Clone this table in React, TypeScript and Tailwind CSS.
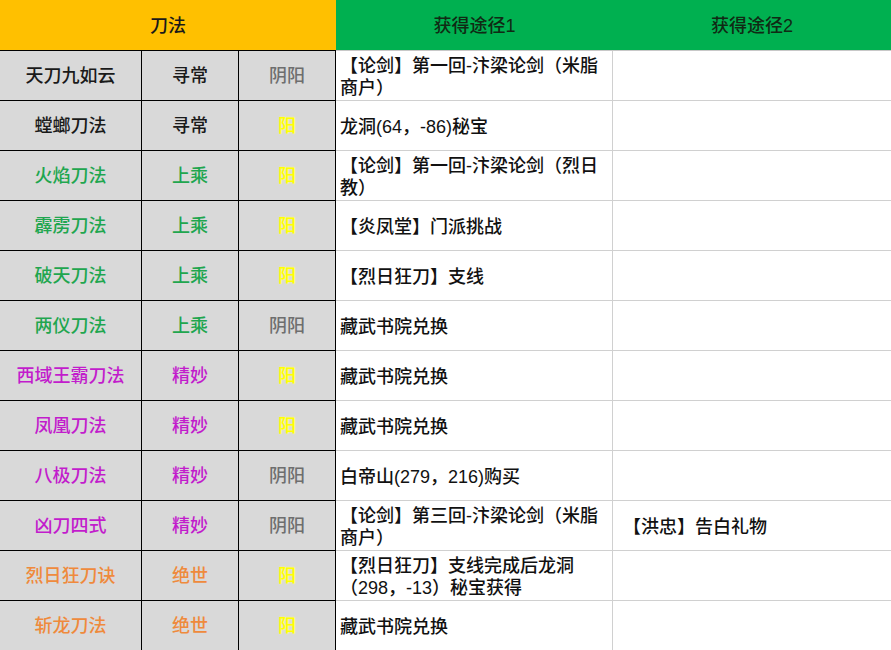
const font = { fontFamily: '"Liberation Sans", "Noto Sans CJK SC", sans-serif' };

type Row = { name: string; grade: string; yy: string; src1: string; src2?: string; tone: string };

const rows: Row[] = [
  { name: "天刀九如云", grade: "寻常", yy: "阴阳", src1: "【论剑】第一回-汴梁论剑（米脂商户）", tone: "text-[#1a1a1a]" },
  { name: "螳螂刀法", grade: "寻常", yy: "阳", src1: "龙洞(64，-86)秘宝", tone: "text-[#1a1a1a]" },
  { name: "火焰刀法", grade: "上乘", yy: "阳", src1: "【论剑】第一回-汴梁论剑（烈日教）", tone: "text-[#1fa64f]" },
  { name: "霹雳刀法", grade: "上乘", yy: "阳", src1: "【炎凤堂】门派挑战", tone: "text-[#1fa64f]" },
  { name: "破天刀法", grade: "上乘", yy: "阳", src1: "【烈日狂刀】支线", tone: "text-[#1fa64f]" },
  { name: "两仪刀法", grade: "上乘", yy: "阴阳", src1: "藏武书院兑换", tone: "text-[#1fa64f]" },
  { name: "西域王霸刀法", grade: "精妙", yy: "阳", src1: "藏武书院兑换", tone: "text-[#c21ccc]" },
  { name: "凤凰刀法", grade: "精妙", yy: "阳", src1: "藏武书院兑换", tone: "text-[#c21ccc]" },
  { name: "八极刀法", grade: "精妙", yy: "阴阳", src1: "白帝山(279，216)购买", tone: "text-[#c21ccc]" },
  { name: "凶刀四式", grade: "精妙", yy: "阴阳", src1: "【论剑】第三回-汴梁论剑（米脂商户）", src2: "【洪忠】告白礼物", tone: "text-[#c21ccc]" },
  { name: "烈日狂刀诀", grade: "绝世", yy: "阳", src1: "【烈日狂刀】支线完成后龙洞（298，-13）秘宝获得", tone: "text-[#ef8a3c]" },
  { name: "斩龙刀法", grade: "绝世", yy: "阳", src1: "藏武书院兑换", tone: "text-[#ef8a3c]" },
];

const leftCell = "h-[50px] flex items-center justify-center bg-[#d9d9d9] border-r border-b border-black";

export default function App() {
  return (
    <div className="w-[891px] h-[650px] overflow-hidden bg-white text-[18px] leading-[22px] font-medium" style={font}>
      <div className="grid grid-cols-[142px_97px_97px_277px_1fr]">
        <div className="col-span-3 h-[51px] pt-[2px] flex items-center justify-center bg-[#ffc000] text-[#1a1a1a] border-b border-black">
          刀法
        </div>
        <div className="h-[51px] pt-[2px] flex items-center justify-center bg-[#00b050] text-[#102a14] border-b border-[#c8c8c8]">
          获得途径1
        </div>
        <div className="h-[51px] pt-[2px] flex items-center justify-center bg-[#00b050] text-[#102a14] border-b border-[#c8c8c8]">
          获得途径2
        </div>
        {rows.map((r) => (
          <>
            <div className={`${leftCell} ${r.tone}`}>{r.name}</div>
            <div className={`${leftCell} ${r.tone}`}>{r.grade}</div>
            <div className={leftCell}>
              {r.yy === "阳" ? (
                <span className="text-[#ffff00] [text-shadow:0_0_2px_#ffff80]">阳</span>
              ) : (
                <span className="text-[#6e6e6e]">阴阳</span>
              )}
            </div>
            <div className="h-[50px] flex items-center pl-[4px] pr-[4px] pt-[2px] border-r border-b border-[#d0d0d0] text-[#111]">
              {r.src1}
            </div>
            <div className="h-[50px] flex items-center pl-[10px] pt-[2px] border-b border-[#d0d0d0] text-[#111]">
              {r.src2}
            </div>
          </>
        ))}
      </div>
    </div>
  );
}
